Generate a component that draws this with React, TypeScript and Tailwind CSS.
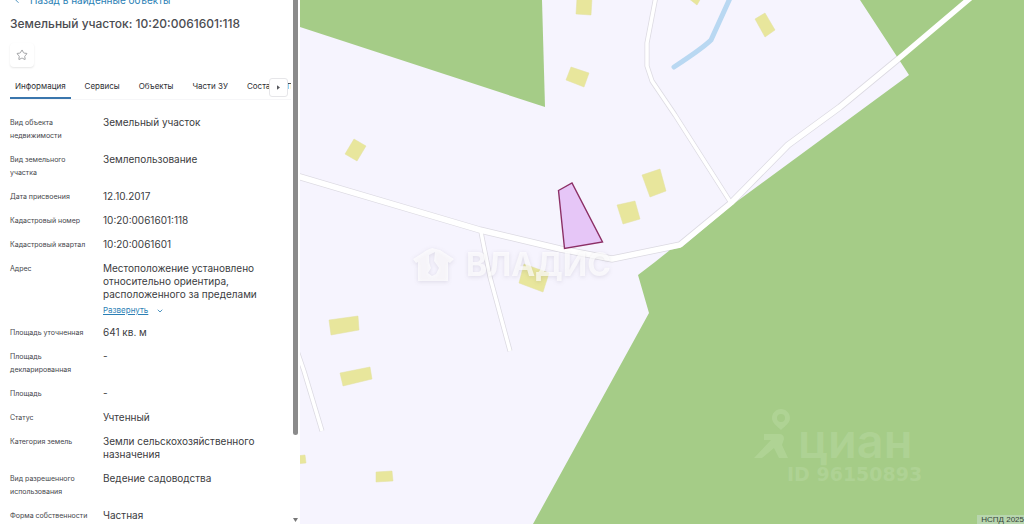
import { ChevronDown, ChevronLeft, Star } from "lucide-react";

type Row = { label: string; value: string; expandable?: boolean };

const rows: Row[] = [
  { label: "Вид объекта недвижимости", value: "Земельный участок" },
  { label: "Вид земельного участка", value: "Землепользование" },
  { label: "Дата присвоения", value: "12.10.2017" },
  { label: "Кадастровый номер", value: "10:20:0061601:118" },
  { label: "Кадастровый квартал", value: "10:20:0061601" },
  {
    label: "Адрес",
    value: "Местоположение установлено относительно ориентира, расположенного за пределами",
    expandable: true,
  },
  { label: "Площадь уточненная", value: "641 кв. м" },
  { label: "Площадь декларированная", value: "-" },
  { label: "Площадь", value: "-" },
  { label: "Статус", value: "Учтенный" },
  { label: "Категория земель", value: "Земли сельскохозяйственного назначения" },
  { label: "Вид разрешенного использования", value: "Ведение садоводства" },
  { label: "Форма собственности", value: "Частная" },
];

const tabs = ["Информация", "Сервисы", "Объекты", "Части ЗУ", "Состав ЕЗП"];

const buildings = [
  "577,-2 592,-2 591,15 576,14",
  "571,67 589,73 584,87 566,80",
  "354,139 366,146 357,161 345,154",
  "642,175 660,169 666,191 650,197",
  "617,205 635,201 640,219 623,224",
  "755,19 765,13 775,30 765,37",
  "688,-2 701,-2 697,5",
  "524,264 549,273 543,292 519,283",
  "329,320 358,316 359,330 331,335",
  "340,373 370,367 372,379 343,386",
  "376,472 392,471 393,481 376,482",
  "296,456 305,455 306,463 296,464",
];

const mainRoad = "M290 174 L480 230 L560 249 L612 259 L680 245 L731 203 L788 145 L840 107 L897 60 L975 -6";
const northRoad = "M656 -4 L647 43 L647 66 L652 81 L675 115 L731 203";
const southRoad = "M481 232 L490 277 L510 351";
const westRoad = "M294 342 L304 371 L322 431";

function Sidebar() {
  return (
    <aside className="flex w-[300px] shrink-0 overflow-hidden bg-white">
      <div className="min-w-0 flex-1 overflow-hidden pl-[10px]">
        <a href="#found" className="-mt-2 flex h-4 items-center gap-2 text-[10px] leading-4 text-[#2b7fb5]">
          <ChevronLeft className="ml-[2px] size-[10px]" />
          Назад в найденные объекты
        </a>
        <h1 className="mt-2 text-[12px] leading-4 font-medium text-[#4b4c51]">
          Земельный участок: 10:20:0061601:118
        </h1>
        <button
          type="button"
          aria-label="В избранное"
          className="mt-[11px] flex size-6 items-center justify-center rounded-sm bg-white text-[#96979b] shadow-[0_1px_2px_rgba(0,0,0,0.1)]"
        >
          <Star className="size-3" strokeWidth={1.8} />
        </button>
        <div className="relative mt-2 border-b border-[#f6f6f8]">
          <div role="tablist" className="flex gap-[9px] overflow-hidden">
            {tabs.map((tab, i) => (
              <button
                key={tab}
                type="button"
                role="tab"
                aria-selected={i === 0}
                className={
                  i === 0
                    ? "h-6 shrink-0 border-b-2 border-[#3a76ad] px-[5px] text-[8px] text-[#2d2e33]"
                    : "h-6 shrink-0 border-b-2 border-transparent px-[5px] text-[8px] text-[#2d2e33]"
                }
              >
                {tab}
              </button>
            ))}
          </div>
          <button
            type="button"
            aria-label="Следующие вкладки"
            className="absolute top-[3px] right-[3px] flex h-[19px] w-[19px] items-center justify-center rounded-[3px] border border-[#e6e6e9] bg-white"
          >
            <svg viewBox="0 0 4 6" className="h-[5px] w-[3px]" fill="#55565b">
              <path d="M0 0L4 3L0 6Z" />
            </svg>
          </button>
        </div>
        <dl className="mt-4 flex flex-col gap-[11px]">
          {rows.map((row) => (
            <div key={row.label} className="flex gap-3">
              <dt className="w-[81px] shrink-0 text-[7px] leading-[13px] text-[#45464b]">{row.label}</dt>
              <dd className="w-[160px] text-[10px] leading-[13px] text-[#3b3c41]">
                {row.value}
                {row.expandable && (
                  <button type="button" className="flex h-[14px] items-end gap-2 text-[8px] leading-[10px] text-[#2b7fb5]">
                    <span className="underline">Развернуть</span>
                    <ChevronDown className="size-2" strokeWidth={2.5} />
                  </button>
                )}
              </dd>
            </div>
          ))}
        </dl>
      </div>
      <div className="flex w-[9px] shrink-0 flex-col items-start justify-between pl-[2px]" aria-hidden="true">
        <div className="h-[83%] w-[5px] rounded-b-full bg-[#8b8b8b]" />
        <svg viewBox="0 0 5 4" className="mb-[2px] h-1 w-[5px]" fill="#777">
          <path d="M0 0H5L2.500 4Z" />
        </svg>
      </div>
    </aside>
  );
}

function ParcelMap() {
  return (
    <svg viewBox="300 0 724 524" preserveAspectRatio="xMinYMin slice" className="block size-full" role="img" aria-label="Карта">
      <rect x="300" width="724" height="524" fill="#f6f4fe" />
      <g fill="none" stroke="#dcdae2" strokeLinejoin="round">
        <path d={mainRoad} strokeWidth="7" />
        <path d={northRoad} strokeWidth="5" />
        <path d={southRoad} strokeWidth="5" />
        <path d={westRoad} strokeWidth="5" />
      </g>
      <g fill="#a5cc87">
        <path d="M300 0H542L545 107L300 27Z" />
        <path d="M860 0L909 75L732 205L682 247L670 250L655 262L638 275L649 313L533 524H1024V0Z" />
      </g>
      <g fill="none" stroke="#fff" strokeLinejoin="round">
        <path d={mainRoad} strokeWidth="5.500" />
        <path d={northRoad} strokeWidth="3.500" />
        <path d={southRoad} strokeWidth="3.500" />
        <path d={westRoad} strokeWidth="3.500" />
      </g>
      <path d="M731 -4Q722 16 711 40Q703 48 674 67" fill="none" stroke="#b9d8f2" strokeWidth="5" strokeLinecap="round" />
      <g fill="#e8e69c" stroke="#e2e0a0" strokeWidth="0.500">
        {buildings.map((points) => (
          <polygon key={points} points={points} />
        ))}
      </g>
      <path d="M558.500 190.500L572 183L602.500 242L564.500 248.500Z" fill="#e6c6f7" stroke="#8c2f66" strokeWidth="1.400" />
      <g className="drop-shadow-[0_1px_2px_rgba(60,50,80,0.18)]" fill="#fff" fillOpacity="0.700">
        <path
          fillRule="evenodd"
          d="M413 259L421 254L427 250L432 248L440 250L454 259L450 263L448 262V281H418V262L416 263ZM429 255L435 252L434 261L439 268L436 274L432 276L428 273L431 268L429 262Z"
        />
        <text x="466" y="276" fontSize="32" fontWeight="700">
          ВЛАДИС
        </text>
      </g>
      <g fill="#b3d59a" fillOpacity="0.700">
        <path
          fillRule="evenodd"
          d="M781 409C776 409 772 413 772 418C772 423 777 426 781 430C785 426 790 423 790 418C790 413 786 409 781 409ZM781 414A4 4 0 1 1 781 422A4 4 0 1 1 781 414Z"
        />
        <path d="M764 434H779Q784 434 784 439L782 445L788 458H779L774 448L762 458H754L771 440H764Z" />
        <text x="798" y="458" fontSize="47" fontWeight="600">
          циан
        </text>
        <text x="787" y="481" fontSize="19" fontWeight="700" className="font-['DejaVu_Sans',sans-serif]">
          ID 96150893
        </text>
      </g>
    </svg>
  );
}

export default function App() {
  return (
    <div className="flex h-screen overflow-hidden bg-white font-['Inter','Liberation_Sans',sans-serif]">
      <Sidebar />
      <main className="relative min-w-0 flex-1 overflow-hidden">
        <ParcelMap />
        <small className="absolute right-0 bottom-0 bg-[#b8d6ae] pl-1 font-['Liberation_Sans',sans-serif] text-[8px] leading-[9px] text-[#34433a]">
          НСПД 2025
        </small>
      </main>
    </div>
  );
}
